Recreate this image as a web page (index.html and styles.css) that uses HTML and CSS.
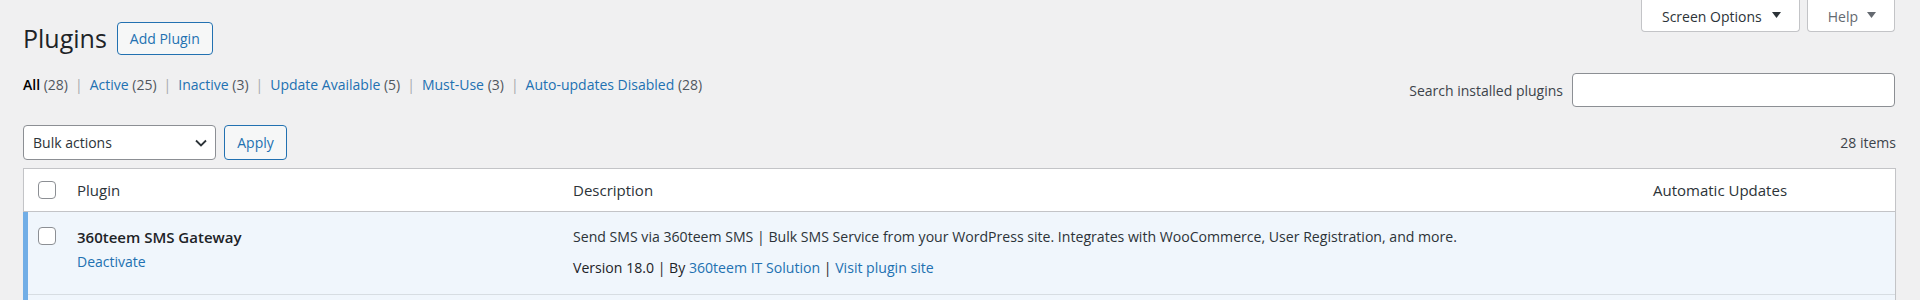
FILE: index.html
```html
<!DOCTYPE html>
<html lang="en">
<head>
    <meta charset="UTF-8">
    <meta name="viewport" content="width=device-width, initial-scale=1.0">
    <title>Plugins</title>
    <link rel="stylesheet" href="styles.css">
</head>
<body>
    <div class="wrap">
        <div class="page-top">
            <div class="title-row">
                <h1 class="page-title">Plugins</h1>
                <a class="btn-outline add-new" href="#">Add Plugin</a>
            </div>
            <div class="meta-links">
                <button class="meta-btn">Screen Options
                    <svg width="9" height="6" viewBox="0 0 9 6"><polygon points="0,0 9,0 4.5,6" fill="currentColor"/></svg>
                </button>
                <button class="meta-btn meta-help">Help
                    <svg width="9" height="6" viewBox="0 0 9 6"><polygon points="0,0 9,0 4.5,6" fill="currentColor"/></svg>
                </button>
            </div>
        </div>

        <div class="subbar">
            <ul class="subsubsub">
                <li><a class="current" href="#">All</a> <span class="count">(28)</span><span class="sep">|</span></li>
                <li><a href="#">Active</a> <span class="count">(25)</span><span class="sep">|</span></li>
                <li><a href="#">Inactive</a> <span class="count">(3)</span><span class="sep">|</span></li>
                <li><a href="#">Update Available</a> <span class="count">(5)</span><span class="sep">|</span></li>
                <li><a href="#">Must-Use</a> <span class="count">(3)</span><span class="sep">|</span></li>
                <li><a href="#">Auto-updates Disabled</a> <span class="count">(28)</span></li>
            </ul>
            <form class="search-box">
                <label for="plugin-search">Search installed plugins</label>
                <input type="search" id="plugin-search">
            </form>
        </div>

        <div class="tablenav">
            <div class="bulk">
                <div class="select">
                    <span>Bulk actions</span>
                    <svg width="12" height="8" viewBox="0 0 12 8"><polyline points="1,1.5 6,6.5 11,1.5" fill="none" stroke="#2c3338" stroke-width="1.8"/></svg>
                </div>
                <button class="btn-outline apply">Apply</button>
            </div>
            <div class="num-items">28 items</div>
        </div>

        <table class="plugins">
            <colgroup>
                <col class="col-check">
                <col class="col-name">
                <col class="col-desc">
                <col>
            </colgroup>
            <thead>
                <tr>
                    <th class="check-column"><input type="checkbox"></th>
                    <th>Plugin</th>
                    <th>Description</th>
                    <th>Automatic Updates</th>
                </tr>
            </thead>
            <tbody>
                <tr class="active">
                    <td class="check-column"><input type="checkbox"></td>
                    <td class="plugin-title">
                        <strong>360teem SMS Gateway</strong>
                        <a href="#">Deactivate</a>
                    </td>
                    <td class="plugin-desc">
                        <p>Send SMS via 360teem SMS | Bulk SMS Service from your WordPress site. Integrates with WooCommerce, User Registration, and more.</p>
                        <p class="version">Version 18.0 | By <a href="#">360teem IT Solution</a> | <a href="#">Visit plugin site</a></p>
                    </td>
                    <td></td>
                </tr>
                <!-- next active row starts just below the fold -->
                <tr class="active">
                    <td class="check-column"></td>
                    <td></td>
                    <td></td>
                    <td></td>
                </tr>
            </tbody>
        </table>
    </div>
</body>
</html>
```

FILE: styles.css
```css
body {
    margin: 0;
    background: #f0f0f1;
    color: #3c434a;
    font-family: "Open Sans", "Noto Sans", sans-serif;
    font-size: 14px;
}

a {
    color: #2271b1;
    text-decoration: none;
}

.wrap {
    padding: 0 24px 0 23px;
}

/* top: title + screen meta */
.page-top {
    display: flex;
    justify-content: space-between;
    align-items: flex-start;
}

.title-row {
    margin-top: 22px;
    display: flex;
    align-items: center;
    gap: 10px;
}

.page-title {
    margin: 0;
    font-size: 25px;
    font-weight: 400;
    line-height: 33px;
    color: #1d2327;
}

.btn-outline {
    box-sizing: border-box;
    display: inline-block;
    border: 1px solid #2271b1;
    border-radius: 4px;
    background: #f6f7f7;
    color: #2271b1;
    font-family: inherit;
    font-size: 14px;
    padding: 0 12px;
    cursor: pointer;
}

.add-new {
    height: 33px;
    line-height: 31px;
}

.meta-links {
    display: flex;
    gap: 7px;
    margin-right: 1px;
}

.meta-btn {
    box-sizing: border-box;
    height: 32px;
    display: inline-flex;
    align-items: center;
    gap: 10px;
    padding: 2px 18px 0 20px;
    background: #fff;
    border: 1px solid #c3c4c7;
    border-top: none;
    border-radius: 0 0 4px 4px;
    color: #2c3338;
    font-family: inherit;
    font-size: 14px;
}

.meta-btn svg {
    margin-top: -4px;
}

.meta-help {
    color: #646970;
    gap: 9px;
}

/* filters + search */
.subbar {
    margin-top: 18px;
    display: flex;
    justify-content: space-between;
    align-items: flex-start;
}

.subsubsub {
    margin: 0;
    padding: 0;
    list-style: none;
    display: flex;
    line-height: 24px;
    color: #50575e;
}

.subsubsub .current {
    color: #000;
    font-weight: 600;
}

.subsubsub .sep {
    margin: 0 7px;
    color: #a7aaad;
}

.search-box {
    display: flex;
    align-items: center;
    gap: 9px;
    margin: 0 1px 0 0;
}

.search-box label {
    color: #3c434a;
}

.search-box input {
    box-sizing: border-box;
    width: 323px;
    height: 34px;
    border: 1px solid #8c8f94;
    border-radius: 4px;
    background: #fff;
}

/* bulk actions row */
.tablenav {
    margin-top: 18px;
    display: flex;
    justify-content: space-between;
    align-items: center;
}

.bulk {
    display: flex;
    gap: 8px;
}

.select {
    box-sizing: border-box;
    width: 193px;
    height: 35px;
    display: flex;
    justify-content: space-between;
    align-items: center;
    padding: 0 8px 0 9px;
    border: 1px solid #8c8f94;
    border-radius: 4px;
    background: #fff;
    color: #2c3338;
}

.apply {
    width: 63px;
    height: 35px;
    padding: 0;
}

.num-items {
    color: #3c434a;
}

/* list table */
.plugins {
    margin-top: 8px;
    width: 100%;
    table-layout: fixed;
    border: 1px solid #c3c4c7;
    border-left: none;
    border-spacing: 0;
    background: #fff;
    box-shadow: 0 1px 1px rgba(0, 0, 0, 0.04);
}

.col-check { width: 42px; }
.col-name { width: 496px; }
.col-desc { width: 1080px; }

.plugins input[type="checkbox"] {
    appearance: none;
    display: block;
    width: 18px;
    height: 18px;
    margin: 0;
    border: 1px solid #8c8f94;
    border-radius: 4px;
    background: #fff;
}

.plugins thead th {
    height: 42px;
    padding: 0 12px;
    border-bottom: 1px solid #c3c4c7;
    text-align: left;
    font-weight: 400;
    font-size: 15px;
    color: #2c3338;
    vertical-align: middle;
}

.plugins thead th.check-column {
    padding: 0 0 0 14px;
    border-left: 1px solid #c3c4c7;
}

.plugins tbody td {
    height: 83px;
    box-sizing: border-box;
    padding: 14px 12px 0;
    vertical-align: top;
    line-height: 22px;
    box-shadow: inset 0 -1px 0 rgba(0, 0, 0, 0.1);
}

.plugins tr.active td {
    background: #f0f6fc;
}

.plugins tbody td.check-column {
    padding: 15px 0 0 14px;
    border-left: 1px solid #72aee6;
    box-shadow: inset 4px 0 0 #72aee6, inset 0 -1px 0 rgba(0, 0, 0, 0.1);
}

.plugin-title strong {
    display: block;
    margin-bottom: 3px;
    font-size: 15px;
    font-weight: 600;
    color: #1d2327;
}

.plugin-desc p {
    margin: 0 0 9px;
    font-size: 14.1px;
    color: #2c3338;
}

.plugin-desc .version {
    color: #1d2327;
}
```
